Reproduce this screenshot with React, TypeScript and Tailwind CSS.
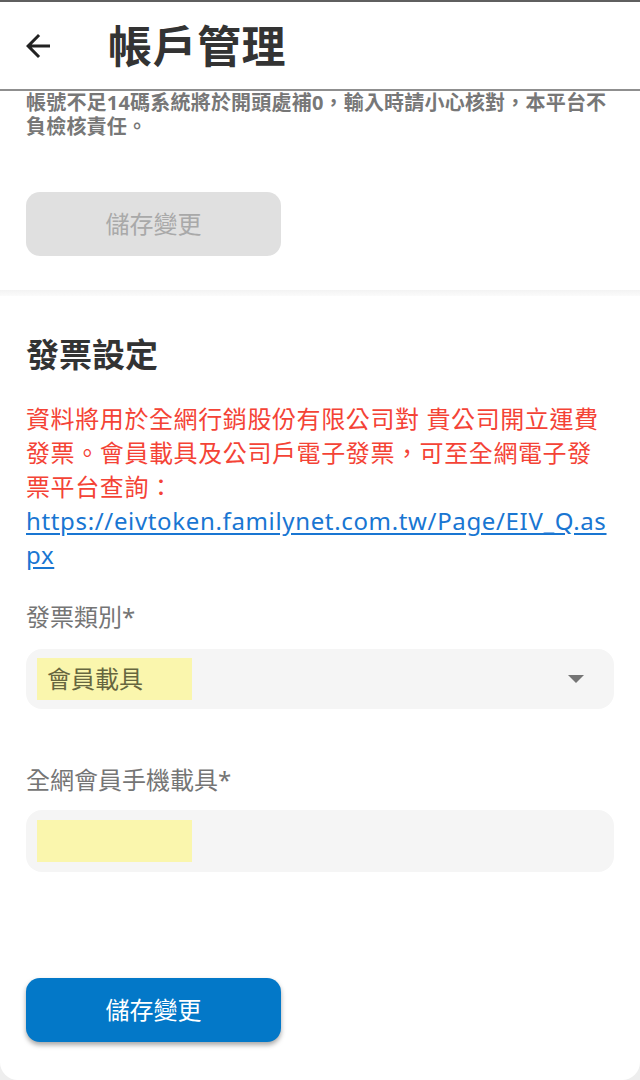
import React from "react";

function ArrowBack() {
  return (
    <svg width="36" height="36" viewBox="0 0 24 24" fill="#222">
      <path d="M20 11H7.83l5.59-5.59L12 4l-8 8 8 8 1.41-1.41L7.83 13H20v-2z" />
    </svg>
  );
}

function Highlight({ children }: { children?: React.ReactNode }) {
  return (
    <span className="inline-flex items-center w-[155px] h-[42px] pl-[10px] bg-[#faf6ad] text-[24px] text-[#66663f] leading-none">
      {children}
    </span>
  );
}

export default function App() {
  return (
    <div className="w-[640px] h-[1080px] overflow-hidden bg-[#eeeeee] flex flex-col font-['Noto_Sans','Noto_Sans_CJK_TC',sans-serif]">
      <header className="relative z-10 shrink-0 h-[91px] box-border bg-white border-t-2 border-[#5f5f5f] border-b-2 border-b-[#8f8f8f] flex items-center">
        <div className="ml-[20px] flex items-center">
          <ArrowBack />
        </div>
        <h1 className="ml-[52px] text-[44px] font-bold text-[#333333] leading-none tracking-[0.5px]">帳戶管理</h1>
      </header>

      <section className="bg-white px-[26px] pb-[34px] shrink-0">
        <p className="text-[20px] leading-[24px] font-bold text-[#777777] tracking-[0.2px]">
          帳號不足14碼系統將於開頭處補0，輸入時請小心核對，本平台不負檢核責任。
        </p>
        <button className="mt-[53px] w-[255px] h-[64px] rounded-[14px] bg-[#e0e0e0] text-[24px] text-[#a9a9a9] flex items-center justify-center">
          儲存變更
        </button>
      </section>

      <div className="h-[6px] shrink-0 bg-gradient-to-b from-[#f3f3f3] to-[#fbfbfb]" />

      <section className="flex-1 bg-white rounded-b-[18px] px-[26px] pt-[39px] flex flex-col">
        <h2 className="text-[33px] leading-[40px] font-bold text-[#333333]">發票設定</h2>
        <div className="mt-[27px] text-[24px] leading-[34px] text-[#f44336] tracking-[0.6px]">
          <p>資料將用於全網行銷股份有限公司對 貴公司開立運費發票。會員載具及公司戶電子發票，可至全網電子發票平台查詢：</p>
          <a
            href="#"
            className="block text-[#1976d2] underline underline-offset-[3px] break-all tracking-[0.65px]"
          >
            https://eivtoken.familynet.com.tw/Page/EIV_Q.aspx
          </a>
        </div>

        <label className="mt-[29px] text-[24px] leading-[32px] text-[#757575]">發票類別*</label>
        <div className="mt-[16px] h-[60px] rounded-[16px] bg-[#f5f5f5] flex items-center justify-between pl-[11px] pr-[30px]">
          <Highlight>會員載具</Highlight>
          <svg width="16" height="8" viewBox="0 0 16 8">
            <polygon points="0,0 16,0 8,8" fill="#757575" />
          </svg>
        </div>

        <label className="mt-[55px] text-[24px] leading-[32px] text-[#757575]">全網會員手機載具*</label>
        <div className="mt-[14px] h-[62px] rounded-[16px] bg-[#f5f5f5] flex items-center pl-[11px]">
          <Highlight />
        </div>

        <button className="mt-[106px] w-[255px] h-[64px] rounded-[14px] bg-[#0378c8] text-[24px] text-white flex items-center justify-center shadow-[0_3px_5px_rgba(0,0,0,0.35)]">
          儲存變更
        </button>
      </section>
    </div>
  );
}
